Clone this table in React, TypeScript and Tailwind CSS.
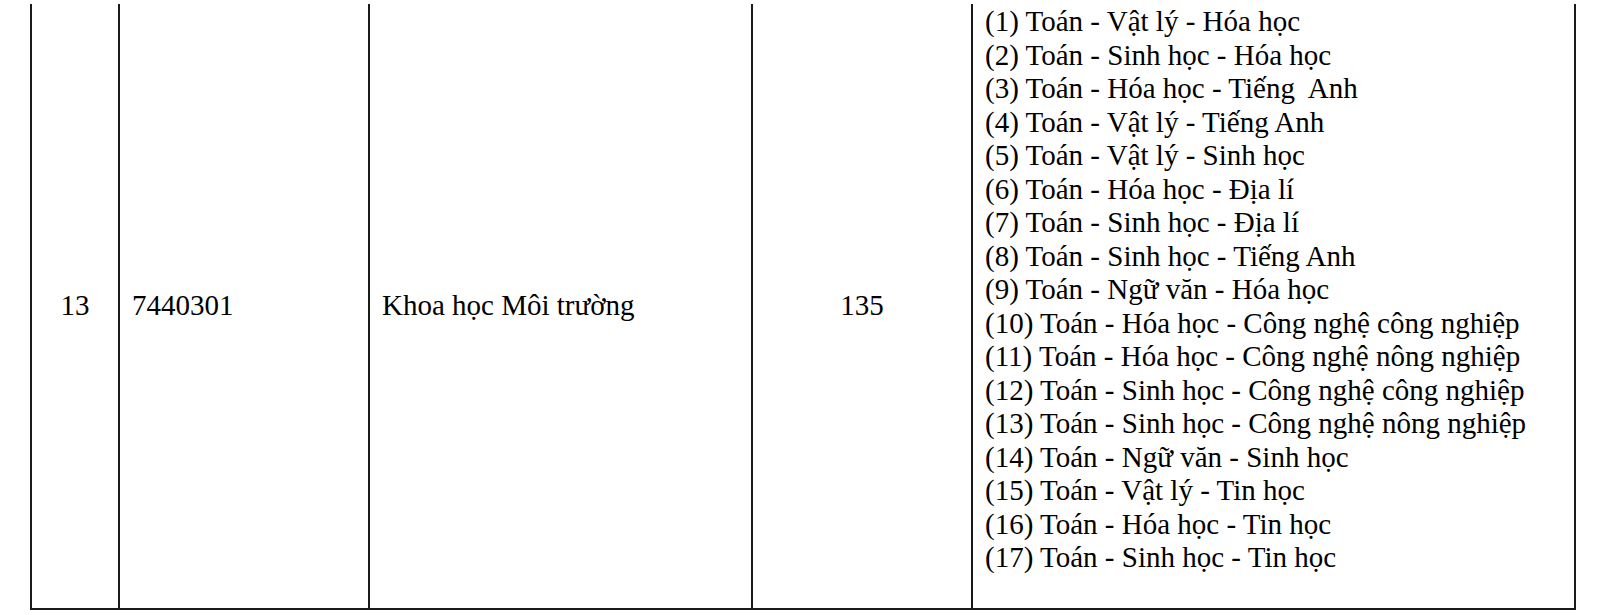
const combos = [
  '(1) Toán - Vật lý - Hóa học',
  '(2) Toán - Sinh học - Hóa học',
  '(3) Toán - Hóa học - Tiếng  Anh',
  '(4) Toán - Vật lý - Tiếng Anh',
  '(5) Toán - Vật lý - Sinh học',
  '(6) Toán - Hóa học - Địa lí',
  '(7) Toán - Sinh học - Địa lí',
  '(8) Toán - Sinh học - Tiếng Anh',
  '(9) Toán - Ngữ văn - Hóa học',
  '(10) Toán - Hóa học - Công nghệ công nghiệp',
  '(11) Toán - Hóa học - Công nghệ nông nghiệp',
  '(12) Toán - Sinh học - Công nghệ công nghiệp',
  '(13) Toán - Sinh học - Công nghệ nông nghiệp',
  '(14) Toán - Ngữ văn - Sinh học',
  '(15) Toán - Vật lý - Tin học',
  '(16) Toán - Hóa học - Tin học',
  '(17) Toán - Sinh học - Tin học',
];

export default function App() {
  return (
    <div className="w-[1600px] h-[615px] bg-white pt-[4px] pl-[30px] font-['Liberation_Serif',serif] text-black text-[29px]">
      <div className="flex h-[606px] w-[1546px] border-b-2 border-[#1a1a1a]">
        <div className="w-[88px] shrink-0 border-l-2 border-[#1a1a1a] flex items-center justify-center">
          13
        </div>
        <div className="w-[250px] shrink-0 border-l-2 border-[#1a1a1a] flex items-center pl-[12px]">
          7440301
        </div>
        <div className="w-[383px] shrink-0 border-l-2 border-[#1a1a1a] flex items-center pl-[12px]">
          Khoa học Môi trường
        </div>
        <div className="w-[220px] shrink-0 border-l-2 border-[#1a1a1a] flex items-center justify-center">
          135
        </div>
        <div className="flex-1 border-x-2 border-[#1a1a1a] pl-[12px] pt-[1px] leading-[33.5px] whitespace-pre">
          {combos.map((c) => (
            <div key={c}>{c}</div>
          ))}
        </div>
      </div>
    </div>
  );
}
